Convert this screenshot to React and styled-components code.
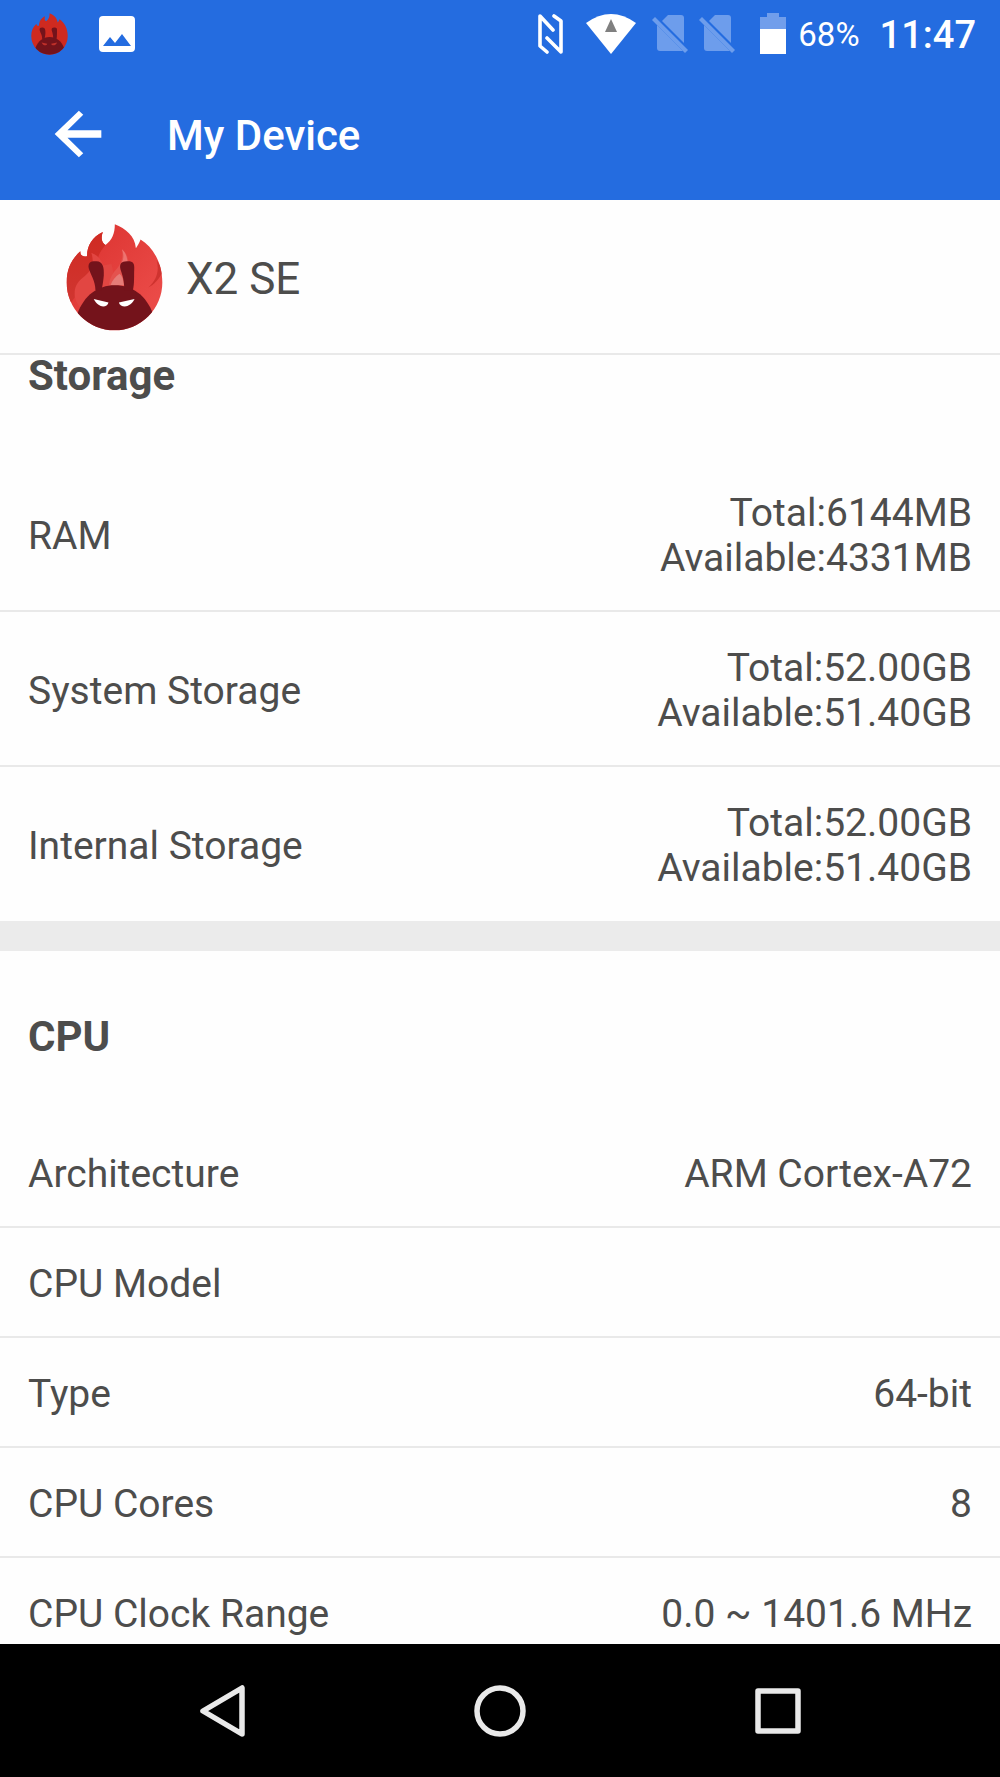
import React, { useLayoutEffect, useRef } from 'react';
import styled, { createGlobalStyle } from 'styled-components';

const COLOR_PRIMARY = '#246ce0';
const COLOR_TEXT = '#4d4d4c';
const COLOR_DIVIDER = '#e9e9e9';
const COLOR_NAV = '#e9e9e9';

const GlobalStyle = createGlobalStyle`
  * {
    box-sizing: border-box;
  }

  body {
    margin: 0;
    background: #fefefe;
    color: ${COLOR_TEXT};
    font-family: Roboto, 'Liberation Sans', sans-serif;
  }
`;

const Screen = styled.div`
  display: flex;
  flex-direction: column;
  height: 100vh;
`;

const StatusBar = styled.div`
  display: flex;
  align-items: center;
  flex: none;
  height: 67px;
  padding: 0 24px 0 31px;
  background: ${COLOR_PRIMARY};
  color: #fff;

  svg {
    display: block;
    flex: none;
  }
`;

const StatusGroup = styled.div`
  display: flex;
  align-items: center;
  gap: ${props => props.$gap}px;
`;

const StatusRight = styled(StatusGroup)`
  margin-left: auto;
`;

const BatteryLevel = styled.span`
  padding-top: 2px;
  font-size: 33px;
  line-height: 40px;
`;

const Clock = styled.time`
  padding-top: 2px;
  font-size: 38px;
  font-weight: 500;
  line-height: 40px;
`;

const AppBar = styled.header`
  display: flex;
  align-items: center;
  gap: 54px;
  flex: none;
  height: 133px;
  padding-left: 43px;
  background: ${COLOR_PRIMARY};
  color: #fff;
`;

const IconButton = styled.button`
  display: flex;
  align-items: center;
  justify-content: center;
  padding: 0;
  border: 0;
  background: none;
  color: inherit;
  cursor: pointer;
`;

const Title = styled.h1`
  margin: 0;
  padding-top: 4px;
  font-size: 42px;
  font-weight: 500;
  line-height: 48px;
`;

const DeviceHeader = styled.section`
  display: flex;
  align-items: center;
  gap: 23px;
  flex: none;
  height: 155px;
  padding: 2px 0 0 66px;
  border-bottom: 2px solid ${COLOR_DIVIDER};
`;

const DeviceName = styled.h2`
  margin: 0;
  padding-top: 2px;
  font-size: 44px;
  font-weight: 400;
  line-height: 52px;
`;

const Details = styled.main`
  flex: 1;
  min-height: 0;
  overflow-y: auto;
  scrollbar-width: none;
`;

const Section = styled.section`
  & + & {
    border-top: 30px solid #ebebeb;
  }
`;

const SectionTitle = styled.h3`
  margin: 0;
  padding: 66px 28px 61px;
  font-size: 42px;
  font-weight: 700;
  line-height: 40px;
`;

const List = styled.dl`
  margin: 0;
`;

const Row = styled.div`
  display: flex;
  align-items: center;
  justify-content: space-between;
  padding: 34px 28px 29px;
  border-bottom: 2px solid ${COLOR_DIVIDER};
  font-size: 39px;
  line-height: 45px;

  &:last-child {
    border-bottom: 0;
    padding-bottom: 30px;
  }
`;

const Value = styled.dd`
  margin: 0;
  text-align: right;

  span {
    display: block;
  }
`;

const NavBar = styled.nav`
  display: grid;
  grid-template-columns: repeat(3, 1fr);
  flex: none;
  height: 133px;
  padding: 0 83px;
  background: #000;
  color: ${COLOR_NAV};
`;

const SECTIONS = [
  {
    title: 'Storage',
    rows: [
      { label: 'RAM', values: ['Total:6144MB', 'Available:4331MB'] },
      { label: 'System Storage', values: ['Total:52.00GB', 'Available:51.40GB'] },
      { label: 'Internal Storage', values: ['Total:52.00GB', 'Available:51.40GB'] },
    ],
  },
  {
    title: 'CPU',
    rows: [
      { label: 'Architecture', values: ['ARM Cortex-A72'] },
      { label: 'CPU Model', values: [] },
      { label: 'Type', values: ['64-bit'] },
      { label: 'CPU Cores', values: ['8'] },
      { label: 'CPU Clock Range', values: ['0.0 ~ 1401.6 MHz'] },
    ],
  },
];

const INITIAL_SCROLL = 65;

const FLAME =
  'M180 41C212 54 240 76 243 113C248 106 253 98 257 87C296 112 322 158 322 216A143 144 0 0 1 36 216C36 176 50 146 77 122C76 134 84 140 97 137C96 108 112 78 144 64C137 84 142 97 152 103C172 90 180 68 180 41Z';

const Logo = ({ width, height, flat }) => (
  <svg width={width} height={height} viewBox="34 40 290 322" preserveAspectRatio="none" aria-hidden="true">
    <defs>
      <linearGradient id="flame" x1="0" y1="0" x2="1" y2="1">
        <stop offset="0.3" stopColor="#e03a37" />
        <stop offset="0.8" stopColor="#ea4a47" />
      </linearGradient>
      <linearGradient id="flameLeft" x1="0" y1="0" x2="0" y2="1">
        <stop offset="0" stopColor="#d02a22" />
        <stop offset="1" stopColor="#d03732" />
      </linearGradient>
      <clipPath id="flameClip">
        <path d={FLAME} />
      </clipPath>
    </defs>
    <path d={FLAME} fill={flat ? '#cf2a20' : 'url(#flame)'} />
    <g clipPath="url(#flameClip)">
      {!flat && (
        <>
          <path d="M30 100L145 60L152 103C138 121 128 134 130 152C126 139 119 131 110 127C120 160 112 186 85 204C66 219 60 238 60 262L30 300Z" fill="url(#flameLeft)" />
          <path d="M110 127C123 163 104 187 84 202C58 222 56 248 64 272L80 300L190 250L170 160L146 165C138 146 128 133 110 127Z" fill="#e24642" />
          <path d="M305 148C313 180 307 207 280 231C298 222 313 206 325 180Z" fill="#cf332f" />
          <path d="M201 116C207 143 197 165 178 184C167 199 162 215 161 232L212 232L222 160C219 139 214 126 201 116Z" fill="#e4524e" />
          <path d="M201 116C208 132 206 146 201 156L218 156C217 139 212 126 201 116Z" fill="#ee7370" />
          <path d="M194 190C182 198 172 210 167 224L207 224C206 208 202 196 194 190Z" fill="#e67c78" />
        </>
      )}
      <path d="M68 310C88 255 128 224 180 224C233 224 274 255 294 310L260 365H100Z" fill="#74131b" />
      <path d="M122 239C122 211 107 192 102 173C99 156 108 151 125 152C145 153 148 170 147 195C145 217 143 227 140 239Z" fill="#74131b" />
      <path d="M208 239C209 214 203 194 197 177C193 160 199 152 216 152C235 151 239 158 238 176C237 194 239 219 234 239Z" fill="#74131b" />
      <path d="M117 266L161 276C157 293 130 294 117 266Z" fill={flat ? '#c0302a' : '#fff'} />
      <path d="M239 266L192 276C197 293 226 294 239 266Z" fill={flat ? '#c0302a' : '#fff'} />
    </g>
  </svg>
);

const ImageIcon = () => (
  <svg width="36" height="36" viewBox="0 0 36 36" aria-hidden="true">
    <path fill="#fff" fillRule="evenodd" d="M4 0H32Q36 0 36 4V32Q36 36 32 36H4Q0 36 0 32V4Q0 0 4 0ZM4 30H32L23 18L16 27L11 21Z" />
  </svg>
);

const NfcIcon = () => (
  <svg width="26" height="40" viewBox="0 0 26 40" aria-hidden="true">
    <g fill="none" stroke="#fff" strokeWidth="3.600" strokeLinecap="round" strokeLinejoin="round">
      <path d="M9 38L2 32V2L15 16" />
      <path d="M16 2L23 7V38L9 24" />
    </g>
  </svg>
);

const WifiIcon = () => (
  <svg width="50" height="40" viewBox="0 0 50 40" aria-hidden="true">
    <path fill="#fff" d="M0 9Q25-9 50 9L25 40Z" />
    <path fill="#808080" d="M25 5L31 18H19Z" />
  </svg>
);

const NoSimIcon = () => (
  <svg width="37" height="40" viewBox="0 0 37 40" aria-hidden="true">
    <g fill="#6d9dec">
      <path d="M16 1H29Q32 1 32 4V29L10 7Z" />
      <path d="M5 11L31 37H8Q5 37 5 34Z" />
      <path d="M3 3L36 36L33 39L0 6Z" />
    </g>
  </svg>
);

const BatteryIcon = () => (
  <svg width="26" height="41" viewBox="0 0 26 41" aria-hidden="true">
    <path fill="#719eeb" d="M7 0H19V4H26V16H0V4H7Z" />
    <path fill="#fff" d="M0 16H26V41H0Z" />
  </svg>
);

const BackArrow = () => (
  <svg width="70" height="70" viewBox="0 0 24 24" aria-hidden="true">
    <path fill="currentColor" d="M20 10.700H8.400L13.800 5.400L12.300 4L4 12L12.300 20L13.800 18.600L8.400 13.300H20Z" />
  </svg>
);

const NavIcon = ({ children }) => (
  <svg width="52" height="52" viewBox="0 0 52 52" fill="none" stroke="currentColor" strokeWidth="5.500" strokeLinejoin="round" aria-hidden="true">
    {children}
  </svg>
);

const DetailRow = ({ label, values }) => (
  <Row>
    <dt>{label}</dt>
    <Value>
      {values.map(value => (
        <span key={value}>{value}</span>
      ))}
    </Value>
  </Row>
);

const App = () => {
  const details = useRef(null);

  useLayoutEffect(() => {
    details.current.scrollTop = INITIAL_SCROLL;
  }, []);

  return (
    <Screen>
      <GlobalStyle />
      <StatusBar>
        <StatusGroup $gap={31}>
          <Logo width={37} height={42} flat />
          <ImageIcon />
        </StatusGroup>
        <StatusRight $gap={20}>
          <StatusGroup $gap={24}>
            <StatusGroup $gap={16}>
              <StatusGroup $gap={22}>
                <NfcIcon />
                <WifiIcon />
              </StatusGroup>
              <StatusGroup $gap={10}>
                <NoSimIcon />
                <NoSimIcon />
              </StatusGroup>
            </StatusGroup>
            <StatusGroup $gap={12}>
              <BatteryIcon />
              <BatteryLevel>68%</BatteryLevel>
            </StatusGroup>
          </StatusGroup>
          <Clock>11:47</Clock>
        </StatusRight>
      </StatusBar>
      <AppBar>
        <IconButton aria-label="Back">
          <BackArrow />
        </IconButton>
        <Title>My Device</Title>
      </AppBar>
      <DeviceHeader>
        <Logo width={97} height={107} />
        <DeviceName>X2 SE</DeviceName>
      </DeviceHeader>
      <Details ref={details}>
        {SECTIONS.map(section => (
          <Section key={section.title}>
            <SectionTitle>{section.title}</SectionTitle>
            <List>
              {section.rows.map(row => (
                <DetailRow key={row.label} {...row} />
              ))}
            </List>
          </Section>
        ))}
      </Details>
      <NavBar>
        <IconButton aria-label="Back">
          <NavIcon>
            <path d="M46 3V49L7 26Z" />
          </NavIcon>
        </IconButton>
        <IconButton aria-label="Home">
          <NavIcon>
            <circle cx="26" cy="26" r="23" />
          </NavIcon>
        </IconButton>
        <IconButton aria-label="Recent apps">
          <NavIcon>
            <rect x="6" y="6" width="40" height="40" />
          </NavIcon>
        </IconButton>
      </NavBar>
    </Screen>
  );
};

export default App;
